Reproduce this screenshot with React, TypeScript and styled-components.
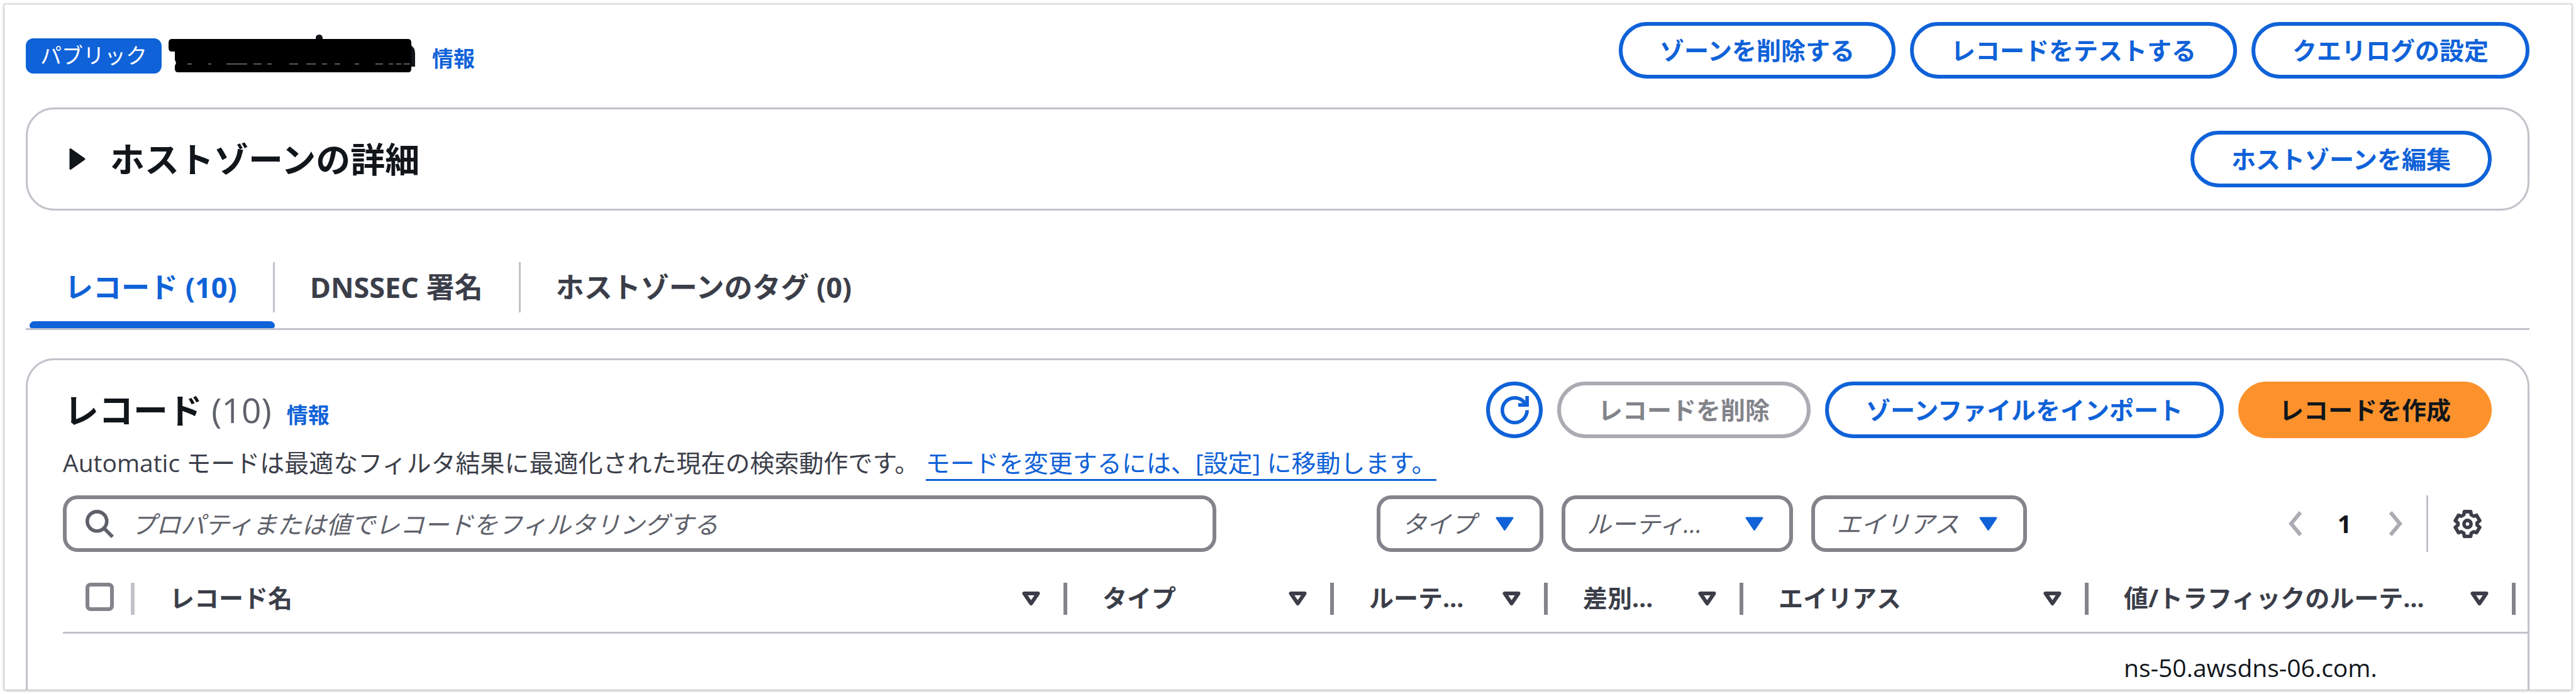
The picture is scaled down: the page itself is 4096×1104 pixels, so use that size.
import React from "react";
import styled, { createGlobalStyle } from "styled-components";

const blue = "#0f62d8";
const ink = "#11161b";
const body = "#3b3e49";
const muted = "#5e616b";
const control = "#83848b";
const line = "#c2c2ca";
const disabled = "#abacb3";

const GlobalStyle = createGlobalStyle`
  * { box-sizing: border-box; }
  body {
    margin: 0;
    background: #fff;
    color: ${body};
    font-family: "Open Sans", "Noto Sans CJK JP", sans-serif;
    font-size: 39px;
    line-height: 56px;
  }
  button, input, select { font: inherit; color: inherit; margin: 0; }
  h1, h2, p { margin: 0; }
`;

const Page = styled.div`
  height: 100vh;
  padding: 7px;
  overflow: hidden;
`;

const Frame = styled.main`
  height: 100%;
  padding: 28px 67px 0 34px;
  overflow: hidden;
  background: #fff;
  box-shadow: 0 0 0 1px #c4c4c4, 0 1px 5px rgba(0, 0, 0, 0.35);
`;

const ZoneHeader = styled.header`
  display: flex;
  justify-content: space-between;
  align-items: flex-start;
`;

const ZoneTitle = styled.h1`
  display: flex;
  align-items: flex-start;
  padding-top: 26px;
  font-size: 34px;
`;

const Badge = styled.span`
  height: 56px;
  padding: 0 23px;
  border-radius: 12px;
  background: ${blue};
  color: #fff;
  font-size: 34px;
  font-weight: 400;
  line-height: 54px;
`;

const Redaction = styled.svg`
  width: 392px;
  height: 60px;
  margin: -6px 27px 0 11px;
`;

const InfoLink = styled.a`
  color: ${blue};
  font-size: 34px;
  font-weight: 700;
  line-height: 56px;
  text-decoration: none;
`;

const ZoneInfo = styled(InfoLink)`
  padding-top: 4px;
`;

const Actions = styled.div`
  display: flex;
  gap: 23px;
`;

const Button = styled.button<{ $tone?: "normal" | "primary" }>`
  height: 90px;
  padding: 0 59px;
  border: 6px solid ${(p) => (p.$tone === "primary" ? "#fd922c" : blue)};
  border-radius: 45px;
  background: ${(p) => (p.$tone === "primary" ? "#fd922c" : "#fff")};
  color: ${(p) => (p.$tone === "primary" ? ink : blue)};
  font-weight: 700;
  line-height: 56px;
  white-space: nowrap;
  &:disabled {
    border-color: ${disabled};
    color: ${control};
  }
`;

const RoundButton = styled(Button)`
  display: flex;
  align-items: center;
  justify-content: center;
  width: 90px;
  padding: 0;
`;

const Panel = styled.section`
  border: 3px solid ${line};
  border-radius: 45px;
`;

const DetailsPanel = styled(Panel)`
  display: flex;
  justify-content: space-between;
  align-items: center;
  margin-top: 46px;
  padding: 34px 57px 34px 64px;
`;

const Expander = styled.button`
  display: flex;
  align-items: center;
  gap: 37px;
  padding: 0;
  border: 0;
  background: none;
  color: ${ink};
  font-size: 55px;
  font-weight: 700;
  line-height: 72px;
`;

const TabList = styled.div`
  display: flex;
  margin-top: 82px;
  padding-left: 6px;
  border-bottom: 3px solid ${line};
`;

const Tab = styled.button`
  display: flex;
  flex-direction: column;
  padding: 0;
  border: 0;
  background: none;
  color: ${body};
  font-size: 45px;
  font-weight: 700;
  &[aria-selected="true"] { color: ${blue}; }
  &[aria-selected="true"]::after {
    content: "";
    height: 11px;
    width: 100%;
    border-radius: 8px 8px 4px 4px;
    background: ${blue};
  }
  &:last-child > span { border-right: 0; }
`;

const TabLabel = styled.span`
  height: 80px;
  margin-bottom: 14px;
  padding: 0 57px 0 56px;
  border-right: 3px solid ${line};
  line-height: 80px;
`;

const RecordsPanel = styled(Panel)`
  height: 700px;
  margin-top: 45px;
  padding: 34px 0 0 56px;
`;

const Toolbar = styled.div`
  display: flex;
  align-items: center;
  justify-content: space-between;
  padding-right: 57px;
`;

const RecordsTitle = styled.div`
  display: flex;
  align-items: baseline;
  padding-left: 2px;
`;

const Heading = styled.h2`
  color: ${ink};
  font-size: 55px;
  line-height: 72px;
  margin-right: 24px;
`;

const Count = styled.span`
  color: ${muted};
  font-weight: 500;
`;

const Description = styled.p`
  height: 91px;
  padding-top: 11px;
`;

const ModeLink = styled.a`
  color: ${blue};
  text-decoration: none;
  border-bottom: 3px solid ${blue};
`;

const Filters = styled.div`
  display: flex;
  align-items: center;
  gap: 29px;
  padding-right: 73px;
`;

const SearchBox = styled.label`
  display: flex;
  align-items: center;
  gap: 28px;
  flex: 0 1 1834px;
  height: 90px;
  margin-right: 226px;
  padding: 0 30px;
  border: 6px solid ${control};
  border-radius: 23px;
  color: ${muted};
`;

const SearchInput = styled.input`
  flex: 1;
  height: 70px;
  padding: 0;
  border: 0;
  outline: 0;
  background: none;
  &::placeholder { color: ${muted}; font-style: italic; opacity: 1; }
`;

const SelectWrap = styled.label<{ $width: number }>`
  position: relative;
  flex: 0 0 ${(p) => p.$width}px;
  height: 90px;
`;

const Select = styled.select`
  appearance: none;
  width: 100%;
  height: 90px;
  padding: 0 80px 0 34px;
  border: 6px solid ${control};
  border-radius: 23px;
  background: #fff;
  color: ${muted};
  font-style: italic;
`;

const Caret = styled.svg`
  position: absolute;
  top: 34px;
  right: 47px;
  width: 29px;
  height: 23px;
  fill: ${blue};
  stroke: ${blue};
  pointer-events: none;
`;

const Pager = styled.nav`
  display: flex;
  align-items: center;
  margin-left: auto;
  height: 90px;
`;

const IconButton = styled.button`
  display: flex;
  padding: 0;
  border: 0;
  background: none;
  color: ${body};
  &:disabled { color: ${disabled}; }
`;

const PageButton = styled(IconButton)`
  padding: 0 59px 0 56px;
  color: ${ink};
  font-weight: 700;
`;

const Divider = styled.span`
  width: 3px;
  height: 90px;
  margin: 0 40px 0 37px;
  background: ${line};
`;

const Table = styled.table`
  width: 100%;
  margin-top: 31px;
  border-collapse: collapse;
  table-layout: fixed;
`;

const Col = styled.col<{ $width?: number }>`
  width: ${(p) => (p.$width ? `${p.$width}px` : "auto")};
`;

const HeadCell = styled.th`
  height: 97px;
  padding: 0;
  border-bottom: 3px solid ${line};
  text-align: left;
  vertical-align: top;
`;

const HeadInner = styled.div<{ $light?: boolean }>`
  display: flex;
  align-items: center;
  justify-content: space-between;
  height: 51px;
  margin-top: 18px;
  padding: 0 37px 0 56px;
  border-right: 6px solid ${(p) => (p.$light ? line : control)};
  white-space: nowrap;
`;

const HeadLabel = styled.span`
  padding-bottom: 4px;
`;

const CheckInner = styled(HeadInner)`
  align-items: flex-start;
  padding: 0 0 0 36px;
`;

const CheckBox = styled.input`
  appearance: none;
  width: 45px;
  height: 45px;
  margin: 0;
  border: 6px solid ${control};
  border-radius: 8px;
  background: #fff;
`;

const Cell = styled.td`
  padding: 26px 0 0 56px;
  color: ${ink};
  font-weight: 500;
  white-space: nowrap;
`;

const columns = [
  { label: "レコード名" },
  { label: "タイプ", width: 424 },
  { label: "ルーテ…", width: 340 },
  { label: "差別…", width: 311 },
  { label: "エイリアス", width: 549 },
  { label: "値/トラフィックのルーテ…", width: 679 },
];

const filters = [
  { label: "タイプ", width: 265 },
  { label: "ルーティ…", width: 368 },
  { label: "エイリアス", width: 343 },
];

const dashes = [
  [30, 7], [63, 5], [92, 33], [135, 13], [157, 7], [192, 14], [219, 15],
  [244, 8], [264, 9], [296, 7], [329, 12], [350, 7], [362, 8], [374, 10],
];

const Chevron = ({ next }: { next?: boolean }) => (
  <svg width="23" height="40" viewBox="0 0 23 40" fill="none" stroke="currentColor" strokeWidth="6">
    <path d={next ? "M3 2 L18 20 L3 38" : "M20 2 L5 20 L20 38"} />
  </svg>
);

export default function App() {
  return (
    <Page>
      <GlobalStyle />
      <Frame>
        <ZoneHeader>
          <ZoneTitle>
            <Badge>パブリック</Badge>
            <Redaction viewBox="0 0 392 60" aria-hidden="true">
              <path d="M234 10 V6 Q234 0 239.500 0 Q245 0 245 6 V10Z" fill={ink} />
              <path d="M384 16 Q392 20 392 30 V51 H384Z" fill={ink} />
              <path d="M5 7 H381 Q386 7 386 13 V54 Q386 60 381 60 H15 Q10 60 10 54 V50 L12 45 L10 40 V27 H5 Q0 27 0 21 V13 Q0 7 5 7Z" />
              {dashes.map(([x, w]) => (
                <rect key={x} x={x} y="46" width={w} height="1.500" fill="#777" />
              ))}
            </Redaction>
            <ZoneInfo href="#zone-info">情報</ZoneInfo>
          </ZoneTitle>
          <Actions>
            <Button>ゾーンを削除する</Button>
            <Button>レコードをテストする</Button>
            <Button>クエリログの設定</Button>
          </Actions>
        </ZoneHeader>

        <DetailsPanel>
          <h2>
            <Expander aria-expanded="false">
              <svg width="30" height="36" viewBox="0 0 30 36" fill={ink} stroke={ink} strokeWidth="3" strokeLinejoin="round">
                <path d="M4 2.500 V33.500 L26 18Z" />
              </svg>
              ホストゾーンの詳細
            </Expander>
          </h2>
          <Button>ホストゾーンを編集</Button>
        </DetailsPanel>

        <TabList role="tablist">
          <Tab role="tab" aria-selected="true"><TabLabel>レコード (10)</TabLabel></Tab>
          <Tab role="tab" aria-selected="false"><TabLabel>DNSSEC 署名</TabLabel></Tab>
          <Tab role="tab" aria-selected="false"><TabLabel>ホストゾーンのタグ (0)</TabLabel></Tab>
        </TabList>

        <RecordsPanel>
          <Toolbar>
            <RecordsTitle>
              <Heading>レコード <Count>(10)</Count></Heading>
              <InfoLink href="#records-info">情報</InfoLink>
            </RecordsTitle>
            <Actions>
              <RoundButton aria-label="更新">
                <svg width="45" height="45" viewBox="0 0 16 16" fill="none" stroke="currentColor" strokeWidth="2">
                  <path d="M15 8c0 3.870-3.130 7-7 7s-7-3.130-7-7 3.130-7 7-7c2.790 0 5.200 1.630 6.330 4" />
                  <path d="M15 0v5h-5" />
                </svg>
              </RoundButton>
              <Button disabled>レコードを削除</Button>
              <Button>ゾーンファイルをインポート</Button>
              <Button $tone="primary">レコードを作成</Button>
            </Actions>
          </Toolbar>
          <Description>
            Automatic モードは最適なフィルタ結果に最適化された現在の検索動作です。{" "}
            <ModeLink href="#settings">モードを変更するには、[設定] に移動します。</ModeLink>
          </Description>
          <Filters>
            <SearchBox>
              <svg width="45" height="45" viewBox="0 0 16 16" fill="none" stroke="currentColor" strokeWidth="2">
                <circle cx="6.500" cy="6.500" r="5.500" />
                <path d="M10.500 10.500 L15.300 15.300" />
              </svg>
              <SearchInput aria-label="レコードを検索" placeholder="プロパティまたは値でレコードをフィルタリングする" />
            </SearchBox>
            {filters.map((f) => (
              <SelectWrap key={f.label} $width={f.width}>
                <Select aria-label={f.label}><option>{f.label}</option></Select>
                <Caret viewBox="0 0 29 23" strokeWidth="3" strokeLinejoin="round">
                  <path d="M2 2 H27 L14.500 20.500Z" />
                </Caret>
              </SelectWrap>
            ))}
            <Pager aria-label="ページ">
              <IconButton disabled aria-label="前へ"><Chevron /></IconButton>
              <PageButton aria-current="page">1</PageButton>
              <IconButton disabled aria-label="次へ"><Chevron next /></IconButton>
              <Divider />
              <IconButton aria-label="設定">
                <svg width="45" height="45" viewBox="0 0 16 16" fill="none" stroke="currentColor" strokeWidth="2" strokeLinejoin="round">
                  <path d="M6.200 1H9.800L10.100 2.800L11.500 3.600L13.100 3.100L14.900 6.100L13.400 7.400V8.600L14.900 9.900L13.100 12.900L11.500 12.400L10.100 13.200L9.800 15H6.200L5.900 13.200L4.500 12.400L2.900 12.900L1.100 9.900L2.600 8.600V7.400L1.100 6.100L2.900 3.100L4.500 3.600L5.900 2.800Z" />
                  <circle cx="8" cy="8" r="2" />
                </svg>
              </IconButton>
            </Pager>
          </Filters>
          <Table>
            <colgroup>
              <Col $width={114} />
              {columns.map((c) => <Col key={c.label} $width={c.width} />)}
              <Col $width={19} />
            </colgroup>
            <thead>
              <tr>
                <HeadCell>
                  <CheckInner $light><CheckBox type="checkbox" aria-label="すべて選択" /></CheckInner>
                </HeadCell>
                {columns.map((c) => (
                  <HeadCell key={c.label} scope="col">
                    <HeadInner>
                      <HeadLabel>{c.label}</HeadLabel>
                      <svg width="29" height="23" viewBox="0 0 29 23" fill="none" stroke={body} strokeWidth="6" strokeLinejoin="round">
                        <path d="M3.500 3 H25.500 L14.500 19Z" />
                      </svg>
                    </HeadInner>
                  </HeadCell>
                ))}
                <HeadCell as="td" />
              </tr>
            </thead>
            <tbody>
              <tr>
                <Cell /><Cell /><Cell /><Cell /><Cell /><Cell />
                <Cell>ns-50.awsdns-06.com.</Cell>
                <Cell />
              </tr>
            </tbody>
          </Table>
        </RecordsPanel>
      </Frame>
    </Page>
  );
}
